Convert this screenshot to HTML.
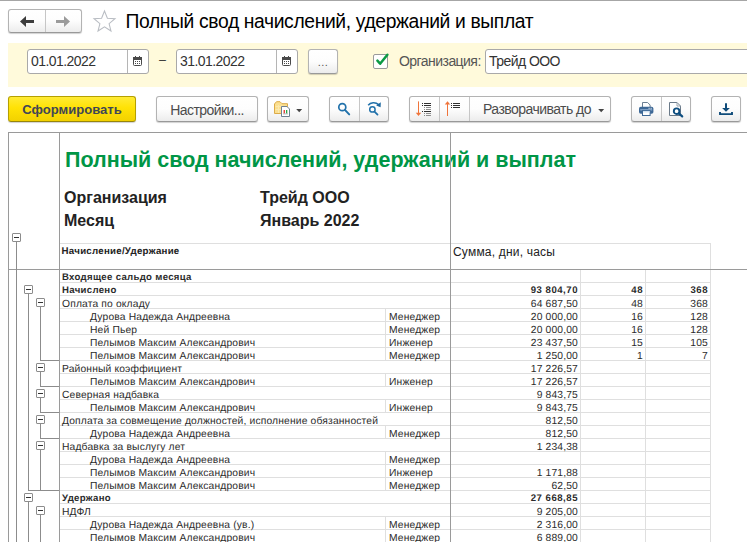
<!DOCTYPE html>
<html lang="ru"><head><meta charset="utf-8"><title>Полный свод начислений, удержаний и выплат</title>
<style>
html,body{margin:0;padding:0}
body{width:747px;height:542px;overflow:hidden;background:#fff;position:relative;font-family:"Liberation Sans",Arial,sans-serif;color:#333}
.abs,.btn,.inp,i,b.bx,.r,.c{position:absolute;display:block}
i{background:#999}
.topline{left:0;top:0;width:747px;height:1px;background:#a6a6a6}
.btn{box-sizing:border-box;height:26px;top:96px;border:1px solid #b3b3b3;border-bottom-color:#999;border-radius:3px;background:linear-gradient(#ffffff,#fdfdfd 50%,#ececec);box-shadow:0 1px 1px rgba(0,0,0,.18);font-size:14px;letter-spacing:-.55px;color:#4c4c4c;text-align:center;line-height:24px;white-space:nowrap}
.btn svg{position:absolute;display:block;overflow:visible}
.btn .sep{position:absolute;top:0;width:1px;height:24px;background:#c6c6c6}
.title{left:125.5px;top:10px;font-size:19.3px;letter-spacing:-.36px;line-height:24px;color:#000;white-space:nowrap}
.band{left:8px;top:43px;width:739px;height:44px;background:#fffadb}
.inp{box-sizing:border-box;top:49px;height:25px;border:1px solid #a9a9a9;border-radius:3px;background:#fff;font-size:14px;letter-spacing:-.55px;line-height:23px;color:#333;padding-left:3px;white-space:nowrap}
.lbl{font-size:14px;letter-spacing:-.55px;color:#555;white-space:nowrap}
/* report */
.rep{left:0;top:0;width:747px;height:542px;overflow:hidden}
.dk{background:#9a9a9a}
.hl{height:1px;background:#dfdfdf}
.vl{width:1px;background:#dfdfdf}
.tl{background:#8c8c8c}
.r{left:0;width:747px;height:13px;font-size:10.3px;line-height:16px;color:#2b2b2b;letter-spacing:.15px;text-rendering:geometricPrecision}
.r.b{font-weight:bold;font-size:9.6px}
.r.b .c{top:1px}
.r.b .nm{letter-spacing:.32px}
.r.b .n{letter-spacing:.52px}
.c{top:2px;height:14px;white-space:nowrap;overflow:visible}
.c.n{text-align:right}

b.bx{box-sizing:border-box;width:9px;height:9px;border:1px solid #8c8c8c;border-radius:1px;background:#fff}
b.bx:after{content:"";position:absolute;left:1px;top:3px;width:5px;height:1px;background:#333}
</style></head><body>
<i class="topline"></i>

<!-- nav buttons -->
<div class="btn" style="left:8px;top:9px;width:74px;height:24px">
  <span class="sep" style="left:36px;height:22px"></span>
  <svg class="abs" style="left:11px;top:6px" width="14" height="11" viewBox="0 0 14 11"><path d="M6 0 L0 5.5 L6 11 L6 7 L14 7 L14 4 L6 4 Z" fill="#3c3c3c"/></svg>
  <svg class="abs" style="left:47px;top:6px" width="14" height="11" viewBox="0 0 14 11"><path d="M8 0 L14 5.5 L8 11 L8 7 L0 7 L0 4 L8 4 Z" fill="#9b9b9b"/></svg>
</div>
<svg class="abs" style="left:92px;top:9px" width="25" height="24" viewBox="0 0 25 24"><path d="M12.5 2 L15.4 9.2 L23 9.7 L17.1 14.6 L19 22 L12.5 17.9 L6 22 L7.9 14.6 L2 9.7 L9.6 9.2 Z" fill="#fff" stroke="#b9bdc3" stroke-width="1.05" stroke-linejoin="miter"/></svg>
<div class="abs title">Полный свод начислений, удержаний и выплат</div>

<!-- filter band -->
<div class="abs band"></div>
<div class="inp" style="left:27px;width:122px">01.01.2022<span class="abs" style="left:99px;top:0;width:1px;height:23px;background:#b5b5b5"></span>
  <svg class="abs" style="left:105px;top:6px" width="9" height="10" viewBox="0 0 9 10"><rect x="0.5" y="1.5" width="8" height="8" rx="1" fill="#fff" stroke="#4a4a4a"/><rect x="0" y="1" width="9" height="3" fill="#4a4a4a"/><rect x="2" y="0" width="1" height="2" fill="#4a4a4a"/><rect x="6" y="0" width="1" height="2" fill="#4a4a4a"/><g fill="#4a4a4a"><rect x="2" y="5" width="1" height="1"/><rect x="4" y="5" width="1" height="1"/><rect x="6" y="5" width="1" height="1"/><rect x="2" y="7" width="1" height="1"/><rect x="4" y="7" width="1" height="1"/><rect x="6" y="7" width="1" height="1"/></g></svg>
</div>
<div class="abs lbl" style="left:159px;top:53px;color:#333;font-size:12.5px;letter-spacing:0">–</div>
<div class="inp" style="left:176px;width:122px">31.01.2022<span class="abs" style="left:99px;top:0;width:1px;height:23px;background:#b5b5b5"></span>
  <svg class="abs" style="left:105px;top:6px" width="9" height="10" viewBox="0 0 9 10"><rect x="0.5" y="1.5" width="8" height="8" rx="1" fill="#fff" stroke="#4a4a4a"/><rect x="0" y="1" width="9" height="3" fill="#4a4a4a"/><rect x="2" y="0" width="1" height="2" fill="#4a4a4a"/><rect x="6" y="0" width="1" height="2" fill="#4a4a4a"/><g fill="#4a4a4a"><rect x="2" y="5" width="1" height="1"/><rect x="4" y="5" width="1" height="1"/><rect x="6" y="5" width="1" height="1"/><rect x="2" y="7" width="1" height="1"/><rect x="4" y="7" width="1" height="1"/><rect x="6" y="7" width="1" height="1"/></g></svg>
</div>
<div class="btn" style="left:308px;top:49px;width:30px;height:25px;line-height:24px;font-size:11px;letter-spacing:.5px;color:#555">...</div>
<div class="abs" style="left:373px;top:54px;width:15px;height:15px;box-sizing:border-box;border:1px solid #9a9a9a;border-radius:2px;background:#fff"></div>
<svg class="abs" style="left:373px;top:52px;overflow:visible" width="17" height="17" viewBox="0 0 17 17"><path d="M4.4 8.7 L7.1 11.7 L14.4 2.7" fill="none" stroke="#0b9a44" stroke-width="2.5" stroke-linecap="round" stroke-linejoin="round"/></svg>
<div class="abs lbl" style="left:399px;top:54px;line-height:15px">Организация:</div>
<div class="inp" style="left:485px;width:270px">Трейд ООО</div>

<!-- toolbar -->
<div class="btn" style="left:8px;width:128px;font-size:13.05px;letter-spacing:0;font-weight:bold;color:#3f4656;padding-top:1px;border-color:#b5a000;border-bottom-color:#97850a;background:linear-gradient(#ffeb35,#ffe205 45%,#f2d100)">Сформировать</div>
<div class="btn" style="left:156px;width:102px;padding-top:1px">Настройки...</div>
<div class="btn" style="left:267px;width:42px">
  <svg style="left:6px;top:4px" width="18" height="17" viewBox="0 0 18 17">
    <path d="M0.5 12.5 V3 L2.5 0.7 H6 L8 2.7 H13.5 V12.5 Z" fill="#fbdf8f" stroke="#dcab48" stroke-width="1"/>
    <path d="M1.5 5.5 H12.5 M1.5 8.5 H8 M4.5 4 V12 M8 4 V7" stroke="#fbe9ae" stroke-width="1" fill="none"/>
    <path d="M7.5 5.5 H13 L15.5 8 V15.5 H7.5 Z" fill="#fff" stroke="#6f8191" stroke-width="1" stroke-linejoin="round"/>
    <rect x="9.6" y="9" width="1.3" height="3.5" fill="#e2322c"/><rect x="12" y="9" width="1.3" height="3.5" fill="#27a844"/><rect x="9" y="12.5" width="5" height="0.8" fill="#9aa"/>
  </svg>
  <svg style="left:28px;top:12px" width="7" height="4" viewBox="0 0 7 4"><path d="M0.2 0 H6.2 L3.2 3.2 Z" fill="#444"/></svg>
</div>
<div class="btn" style="left:329px;width:60px"><span class="sep" style="left:29px"></span>
  <svg style="left:7px;top:5px" width="14" height="14" viewBox="0 0 14 14"><circle cx="5.3" cy="5.2" r="3.5" fill="none" stroke="#2272ab" stroke-width="1.7"/><path d="M7.9 7.9 L12.2 12.4" stroke="#2272ab" stroke-width="2" stroke-linecap="round"/></svg>
  <svg style="left:37px;top:4px" width="16" height="16" viewBox="0 0 16 16"><circle cx="5.4" cy="8.4" r="2.7" fill="none" stroke="#2272ab" stroke-width="1.5"/><path d="M7.5 10.6 L10.5 13.6" stroke="#2272ab" stroke-width="1.8" stroke-linecap="round"/><path d="M1.2 4.3 C3.5 1.2 8.5 0.8 11.6 3.6" fill="none" stroke="#2272ab" stroke-width="1.5"/><path d="M13.8 1.2 L13.6 6.2 L9.2 4.6 Z" fill="#1d68a0"/></svg>
</div>
<div class="btn" style="left:409px;width:202px"><span class="sep" style="left:29px"></span><span class="sep" style="left:59px"></span>
  <svg style="left:6px;top:4px" width="18" height="16" viewBox="0 0 18 16">
    <path d="M2.5 0.4 V14" stroke="#f0743a" stroke-width="1"/><path d="M-0.2 11.8 H5.2 L2.5 15 Z" fill="#f0743a"/>
    <g fill="#2f2f2f"><rect x="6" y="2" width="1" height="1"/><rect x="8" y="2" width="7" height="1"/><rect x="6" y="4" width="1" height="1"/><rect x="8" y="4" width="7" height="1"/><rect x="6" y="10" width="1" height="1"/><rect x="8" y="10" width="7" height="1"/></g>
    <g fill="#909090"><rect x="8" y="6" width="1" height="1"/><rect x="10" y="6" width="5" height="1"/><rect x="8" y="8" width="1" height="1"/><rect x="10" y="8" width="5" height="1"/><rect x="8" y="12" width="1" height="1"/><rect x="10" y="12" width="5" height="1"/><rect x="8" y="14" width="1" height="1"/><rect x="10" y="14" width="5" height="1"/></g>
  </svg>
  <svg style="left:35px;top:4px" width="18" height="16" viewBox="0 0 18 16">
    <path d="M2.5 1.5 V15" stroke="#f0743a" stroke-width="1"/><path d="M-0.2 3.4 H5.2 L2.5 0.2 Z" fill="#f0743a"/>
    <g fill="#2f2f2f"><rect x="6" y="2" width="1" height="1"/><rect x="8" y="2" width="7" height="1"/><rect x="6" y="4" width="1" height="1"/><rect x="8" y="4" width="7" height="1"/><rect x="6" y="6" width="1" height="1"/><rect x="8" y="6" width="7" height="1"/></g>
  </svg>
  <span class="abs" style="left:63px;top:0;width:128px;text-align:center">Разворачивать до</span>
  <svg style="left:188px;top:12px" width="7" height="4" viewBox="0 0 7 4"><path d="M0.2 0 H6.2 L3.2 3.2 Z" fill="#444"/></svg>
</div>
<div class="btn" style="left:631px;width:60px"><span class="sep" style="left:29px"></span>
  <svg style="left:7px;top:5px" width="15" height="14" viewBox="0 0 15 14">
    <path d="M3.5 5 V0.5 H8.6 L11.1 3 V5" fill="#fff" stroke="#6b7f93" stroke-width="1"/>
    <rect x="0" y="4.8" width="14.4" height="7" rx="1.8" fill="#3d6896"/>
    <rect x="1.2" y="7" width="12" height="1.6" fill="#7f9fc4"/>
    <rect x="9.6" y="5.8" width="1" height="1" fill="#fff"/><rect x="11.6" y="5.8" width="1" height="1" fill="#fff"/>
    <rect x="3.5" y="8.6" width="7.6" height="4.9" fill="#fff" stroke="#3d6896" stroke-width="1"/>
    <rect x="4" y="9.1" width="6.6" height="1.3" fill="#cfe0f2"/>
  </svg>
  <svg style="left:37px;top:5px" width="15" height="15" viewBox="0 0 15 15">
    <path d="M0.5 0.5 H8 L11.5 4 V13.5 H0.5 Z" fill="#fff" stroke="#6b7a89" stroke-width="1"/><path d="M8 0.5 V4 H11.5" fill="none" stroke="#9aa6b1" stroke-width="1"/>
    <circle cx="7.6" cy="9.2" r="2.8" fill="#fff" stroke="#0f4f81" stroke-width="1.9"/><path d="M9.8 11.4 L13.2 14.4" stroke="#0f4f81" stroke-width="2.2" stroke-linecap="round"/>
  </svg>
</div>
<div class="btn" style="left:711px;width:30px">
  <svg style="left:7px;top:6px" width="15" height="13" viewBox="0 0 15 13"><path d="M6 0.2 H8 V4.9 H10.9 L7 8.8 L3.1 4.9 H6 Z" fill="#0f4c7a"/><path d="M1 9 V11.1 H13 V9" fill="none" stroke="#0f4c7a" stroke-width="1.9"/></svg>
</div>

<!-- report -->
<div class="abs rep">
<i class="hl" style="left:60px;top:282px;width:651px"></i>
<i class="hl" style="left:60px;top:295px;width:651px"></i>
<i class="hl" style="left:60px;top:308px;width:651px"></i>
<i class="hl" style="left:60px;top:321px;width:651px"></i>
<i class="hl" style="left:60px;top:334px;width:651px"></i>
<i class="hl" style="left:60px;top:347px;width:651px"></i>
<i class="hl" style="left:60px;top:360px;width:651px"></i>
<i class="hl" style="left:60px;top:373px;width:651px"></i>
<i class="hl" style="left:60px;top:386px;width:651px"></i>
<i class="hl" style="left:60px;top:399px;width:651px"></i>
<i class="hl" style="left:60px;top:412px;width:651px"></i>
<i class="hl" style="left:60px;top:425px;width:651px"></i>
<i class="hl" style="left:60px;top:438px;width:651px"></i>
<i class="hl" style="left:60px;top:451px;width:651px"></i>
<i class="hl" style="left:60px;top:464px;width:651px"></i>
<i class="hl" style="left:60px;top:477px;width:651px"></i>
<i class="hl" style="left:60px;top:490px;width:651px"></i>
<i class="hl" style="left:60px;top:503px;width:651px"></i>
<i class="hl" style="left:60px;top:516px;width:651px"></i>
<i class="hl" style="left:60px;top:529px;width:651px"></i>
<i class="hl" style="left:60px;top:243px;width:651px"></i>
<i class="vl" style="left:710px;top:243px;height:299px"></i>
<i class="vl" style="left:580px;top:269px;height:273px"></i>
<i class="vl" style="left:645px;top:269px;height:273px"></i>
<div class="r b" style="top:269px">
<span class="c nm" style="left:62px;width:388px">Входящее сальдо месяца</span>
</div>
<div class="r b" style="top:282px">
<span class="c nm" style="left:62px;width:388px">Начислено</span>
<span class="c n" style="left:451px;width:127px">93 804,70</span>
<span class="c n" style="left:581px;width:62px">48</span>
<span class="c n" style="left:646px;width:62px">368</span>
</div>
<div class="r" style="top:295px">
<span class="c nm" style="left:62px;width:388px">Оплата по окладу</span>
<span class="c n" style="left:451px;width:127px">64 687,50</span>
<span class="c n" style="left:581px;width:62px">48</span>
<span class="c n" style="left:646px;width:62px">368</span>
</div>
<div class="r" style="top:308px">
<span class="c nm" style="left:90px;width:295px">Дурова Надежда Андреевна</span>
<i class="vl" style="left:385px;top:0;height:13px"></i>
<span class="c" style="left:389px;width:60px">Менеджер</span>
<span class="c n" style="left:451px;width:127px">20 000,00</span>
<span class="c n" style="left:581px;width:62px">16</span>
<span class="c n" style="left:646px;width:62px">128</span>
</div>
<div class="r" style="top:321px">
<span class="c nm" style="left:90px;width:295px">Ней Пьер</span>
<i class="vl" style="left:385px;top:0;height:13px"></i>
<span class="c" style="left:389px;width:60px">Менеджер</span>
<span class="c n" style="left:451px;width:127px">20 000,00</span>
<span class="c n" style="left:581px;width:62px">16</span>
<span class="c n" style="left:646px;width:62px">128</span>
</div>
<div class="r" style="top:334px">
<span class="c nm" style="left:90px;width:295px">Пелымов Максим Александрович</span>
<i class="vl" style="left:385px;top:0;height:13px"></i>
<span class="c" style="left:389px;width:60px">Инженер</span>
<span class="c n" style="left:451px;width:127px">23 437,50</span>
<span class="c n" style="left:581px;width:62px">15</span>
<span class="c n" style="left:646px;width:62px">105</span>
</div>
<div class="r" style="top:347px">
<span class="c nm" style="left:90px;width:295px">Пелымов Максим Александрович</span>
<i class="vl" style="left:385px;top:0;height:13px"></i>
<span class="c" style="left:389px;width:60px">Менеджер</span>
<span class="c n" style="left:451px;width:127px">1 250,00</span>
<span class="c n" style="left:581px;width:62px">1</span>
<span class="c n" style="left:646px;width:62px">7</span>
</div>
<div class="r" style="top:360px">
<span class="c nm" style="left:62px;width:388px">Районный коэффициент</span>
<span class="c n" style="left:451px;width:127px">17 226,57</span>
</div>
<div class="r" style="top:373px">
<span class="c nm" style="left:90px;width:295px">Пелымов Максим Александрович</span>
<i class="vl" style="left:385px;top:0;height:13px"></i>
<span class="c" style="left:389px;width:60px">Инженер</span>
<span class="c n" style="left:451px;width:127px">17 226,57</span>
</div>
<div class="r" style="top:386px">
<span class="c nm" style="left:62px;width:388px">Северная надбавка</span>
<span class="c n" style="left:451px;width:127px">9 843,75</span>
</div>
<div class="r" style="top:399px">
<span class="c nm" style="left:90px;width:295px">Пелымов Максим Александрович</span>
<i class="vl" style="left:385px;top:0;height:13px"></i>
<span class="c" style="left:389px;width:60px">Инженер</span>
<span class="c n" style="left:451px;width:127px">9 843,75</span>
</div>
<div class="r" style="top:412px">
<span class="c nm" style="left:62px;width:388px">Доплата за совмещение должностей, исполнение обязанностей</span>
<span class="c n" style="left:451px;width:127px">812,50</span>
</div>
<div class="r" style="top:425px">
<span class="c nm" style="left:90px;width:295px">Дурова Надежда Андреевна</span>
<i class="vl" style="left:385px;top:0;height:13px"></i>
<span class="c" style="left:389px;width:60px">Менеджер</span>
<span class="c n" style="left:451px;width:127px">812,50</span>
</div>
<div class="r" style="top:438px">
<span class="c nm" style="left:62px;width:388px">Надбавка за выслугу лет</span>
<span class="c n" style="left:451px;width:127px">1 234,38</span>
</div>
<div class="r" style="top:451px">
<span class="c nm" style="left:90px;width:295px">Дурова Надежда Андреевна</span>
<i class="vl" style="left:385px;top:0;height:13px"></i>
<span class="c" style="left:389px;width:60px">Менеджер</span>
</div>
<div class="r" style="top:464px">
<span class="c nm" style="left:90px;width:295px">Пелымов Максим Александрович</span>
<i class="vl" style="left:385px;top:0;height:13px"></i>
<span class="c" style="left:389px;width:60px">Инженер</span>
<span class="c n" style="left:451px;width:127px">1 171,88</span>
</div>
<div class="r" style="top:477px">
<span class="c nm" style="left:90px;width:295px">Пелымов Максим Александрович</span>
<i class="vl" style="left:385px;top:0;height:13px"></i>
<span class="c" style="left:389px;width:60px">Менеджер</span>
<span class="c n" style="left:451px;width:127px">62,50</span>
</div>
<div class="r b" style="top:490px">
<span class="c nm" style="left:62px;width:388px">Удержано</span>
<span class="c n" style="left:451px;width:127px">27 668,85</span>
</div>
<div class="r" style="top:503px">
<span class="c nm" style="left:62px;width:388px">НДФЛ</span>
<span class="c n" style="left:451px;width:127px">9 205,00</span>
</div>
<div class="r" style="top:516px">
<span class="c nm" style="left:90px;width:295px">Дурова Надежда Андреевна (ув.)</span>
<i class="vl" style="left:385px;top:0;height:13px"></i>
<span class="c" style="left:389px;width:60px">Менеджер</span>
<span class="c n" style="left:451px;width:127px">2 316,00</span>
</div>
<div class="r" style="top:529px">
<span class="c nm" style="left:90px;width:295px">Пелымов Максим Александрович</span>
<i class="vl" style="left:385px;top:0;height:13px"></i>
<span class="c" style="left:389px;width:60px">Менеджер</span>
<span class="c n" style="left:451px;width:127px">6 889,00</span>
</div>
<div class="abs" style="left:65px;top:148px;font-size:21.5px;line-height:25px;font-weight:bold;color:#009646;white-space:nowrap">Полный свод начислений, удержаний и выплат</div>
<div class="abs" style="left:64px;top:189px;font-size:16px;line-height:18px;font-weight:bold;color:#222;white-space:nowrap">Организация</div>
<div class="abs" style="left:260px;top:189px;font-size:16px;line-height:18px;font-weight:bold;color:#222;white-space:nowrap">Трейд ООО</div>
<div class="abs" style="left:64px;top:212px;font-size:16px;line-height:18px;font-weight:bold;color:#222;white-space:nowrap">Месяц</div>
<div class="abs" style="left:260px;top:212px;font-size:16px;line-height:18px;font-weight:bold;color:#222;white-space:nowrap">Январь 2022</div>
<div class="abs" style="left:61.6px;top:246px;font-size:9.7px;letter-spacing:.26px;line-height:11px;font-weight:bold;color:#222;white-space:nowrap;text-rendering:geometricPrecision">Начисление/Удержание</div>
<div class="abs" style="left:453px;top:245px;font-size:12px;letter-spacing:.2px;line-height:14px;color:#222;white-space:nowrap">Сумма, дни, часы</div>
<i class="dk" style="left:8px;top:132px;width:739px;height:1px"></i>
<i class="dk" style="left:8px;top:132px;width:1px;height:410px"></i>
<i class="dk" style="left:59px;top:132px;width:1px;height:410px"></i>
<i class="dk" style="left:450px;top:132px;width:1px;height:410px"></i>
<i class="dk" style="left:8px;top:269px;width:739px;height:1px"></i>
<i class="tl" style="left:16px;top:242px;width:1px;height:300px"></i>
<i class="tl" style="left:28px;top:294px;width:1px;height:196px"></i>
<i class="tl" style="left:28px;top:490px;width:31px;height:1px"></i>
<i class="tl" style="left:28px;top:502px;width:1px;height:40px"></i>
<i class="tl" style="left:40px;top:307px;width:1px;height:53px"></i>
<i class="tl" style="left:40px;top:360px;width:19px;height:1px"></i>
<i class="tl" style="left:40px;top:372px;width:1px;height:14px"></i>
<i class="tl" style="left:40px;top:386px;width:19px;height:1px"></i>
<i class="tl" style="left:40px;top:398px;width:1px;height:14px"></i>
<i class="tl" style="left:40px;top:412px;width:19px;height:1px"></i>
<i class="tl" style="left:40px;top:424px;width:1px;height:14px"></i>
<i class="tl" style="left:40px;top:438px;width:19px;height:1px"></i>
<i class="tl" style="left:40px;top:450px;width:1px;height:40px"></i>
<i class="tl" style="left:40px;top:490px;width:19px;height:1px"></i>
<i class="tl" style="left:40px;top:515px;width:1px;height:27px"></i>
<b class="bx" style="left:12px;top:233px"></b>
<b class="bx" style="left:24px;top:285px"></b>
<b class="bx" style="left:24px;top:493px"></b>
<b class="bx" style="left:36px;top:298px"></b>
<b class="bx" style="left:36px;top:363px"></b>
<b class="bx" style="left:36px;top:389px"></b>
<b class="bx" style="left:36px;top:415px"></b>
<b class="bx" style="left:36px;top:441px"></b>
<b class="bx" style="left:36px;top:506px"></b>
</div>
</body></html>
